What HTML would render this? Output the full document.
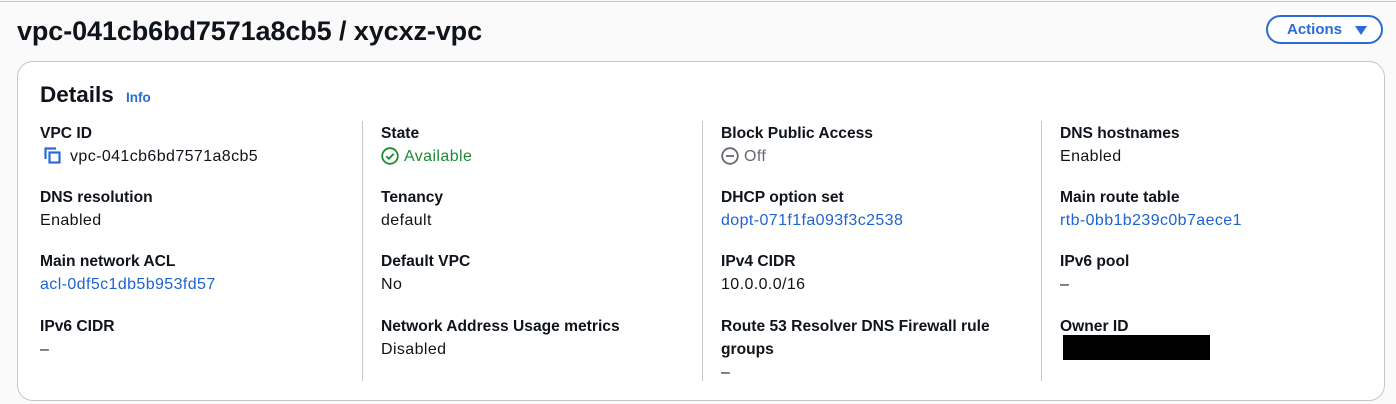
<!DOCTYPE html><html><head><style>
body{margin:0;width:1396px;height:404px;background:#fafafa;font-family:"Liberation Sans",sans-serif;color:#0f141a;position:relative;overflow:hidden}
.top{position:absolute;left:0;right:0;top:1px;height:1px;background:#c6c6cd}
h1{position:absolute;left:17px;top:16px;margin:0;font-size:27px;font-weight:bold;letter-spacing:-0.1px}
.btn{position:absolute;left:1266px;top:15px;width:117px;height:29px;box-sizing:border-box;border:2px solid #2a6bd6;border-radius:16px;background:#fff;color:#2a6bd6;font-weight:bold;font-size:15px;line-height:25px;padding-left:19px}
.btn span{position:absolute;right:14px;top:9px;width:0;height:0;border-left:6px solid transparent;border-right:6px solid transparent;border-top:9px solid #2a6bd6}
.card{position:absolute;left:17px;top:61px;width:1368px;height:340px;box-sizing:border-box;background:#fff;border:1px solid #c6c6cd;border-radius:16px}
.dt{position:absolute;left:40px;top:82px;font-size:22.5px;font-weight:bold}
.info{position:absolute;left:126px;top:90px;font-size:13.5px;font-weight:bold;color:#2a6bd6}
.div{position:absolute;top:121px;height:260px;width:1px;background:#c6c6cd}
.l{position:absolute;font-size:15.6px;font-weight:bold;line-height:23px;margin-top:1px}
.v{position:absolute;font-size:16px;letter-spacing:0.4px;line-height:23px;margin-top:1px}
.a{color:#1e62d4}
</style></head><body>
<div class="top"></div>
<h1>vpc-041cb6bd7571a8cb5 / xycxz-vpc</h1>
<div class="btn">Actions<span></span></div>
<div class="card"></div>
<div class="dt">Details</div><div class="info">Info</div>
<div class="div" style="left:362px"></div><div class="div" style="left:702px"></div><div class="div" style="left:1041px"></div>

<div class="l" style="left:40px;top:121px">VPC ID</div>
<svg style="position:absolute;left:44px;top:147px" width="20" height="18"><path d="M1.5 12V1.5H12" fill="none" stroke="#2a6bd6" stroke-width="2.2"/><rect x="5.5" y="5.5" width="10" height="10" fill="none" stroke="#2a6bd6" stroke-width="2.2"/></svg>
<div class="v" style="left:70px;top:144px">vpc-041cb6bd7571a8cb5</div>
<div class="l" style="left:40px;top:185px">DNS resolution</div><div class="v" style="left:40px;top:208px">Enabled</div>
<div class="l" style="left:40px;top:249px">Main network ACL</div><div class="v a" style="left:40px;top:272px">acl-0df5c1db5b953fd57</div>
<div class="l" style="left:40px;top:314px">IPv6 CIDR</div><div class="v" style="left:40px;top:337px">–</div>

<div class="l" style="left:381px;top:121px">State</div>
<svg style="position:absolute;left:381px;top:147px" width="18" height="18"><circle cx="9" cy="9" r="7.8" fill="none" stroke="#1f8a36" stroke-width="1.8"/><path d="M5.3 9.2l2.6 2.6 4.8-5" fill="none" stroke="#1f8a36" stroke-width="1.8"/></svg>
<div class="v" style="left:404px;top:144px;color:#1f8a36">Available</div>
<div class="l" style="left:381px;top:185px">Tenancy</div><div class="v" style="left:381px;top:208px">default</div>
<div class="l" style="left:381px;top:249px">Default VPC</div><div class="v" style="left:381px;top:272px">No</div>
<div class="l" style="left:381px;top:314px">Network Address Usage metrics</div><div class="v" style="left:381px;top:337px">Disabled</div>

<div class="l" style="left:721px;top:121px">Block Public Access</div>
<svg style="position:absolute;left:721px;top:147px" width="18" height="18"><circle cx="9" cy="9" r="7.8" fill="none" stroke="#656871" stroke-width="1.8"/><path d="M5 9h8" stroke="#656871" stroke-width="1.8"/></svg>
<div class="v" style="left:744px;top:144px;color:#656871">Off</div>
<div class="l" style="left:721px;top:185px">DHCP option set</div><div class="v a" style="left:721px;top:208px">dopt-071f1fa093f3c2538</div>
<div class="l" style="left:721px;top:249px">IPv4 CIDR</div><div class="v" style="left:721px;top:272px">10.0.0.0/16</div>
<div class="l" style="left:721px;top:314px;width:300px">Route 53 Resolver DNS Firewall rule groups</div><div class="v" style="left:721px;top:360px">–</div>

<div class="l" style="left:1060px;top:121px">DNS hostnames</div><div class="v" style="left:1060px;top:144px">Enabled</div>
<div class="l" style="left:1060px;top:185px">Main route table</div><div class="v a" style="left:1060px;top:208px">rtb-0bb1b239c0b7aece1</div>
<div class="l" style="left:1060px;top:249px">IPv6 pool</div><div class="v" style="left:1060px;top:272px">–</div>
<div class="l" style="left:1060px;top:314px">Owner ID</div>
<div style="position:absolute;left:1063px;top:335px;width:147px;height:25px;background:#000"></div>
</body></html>
